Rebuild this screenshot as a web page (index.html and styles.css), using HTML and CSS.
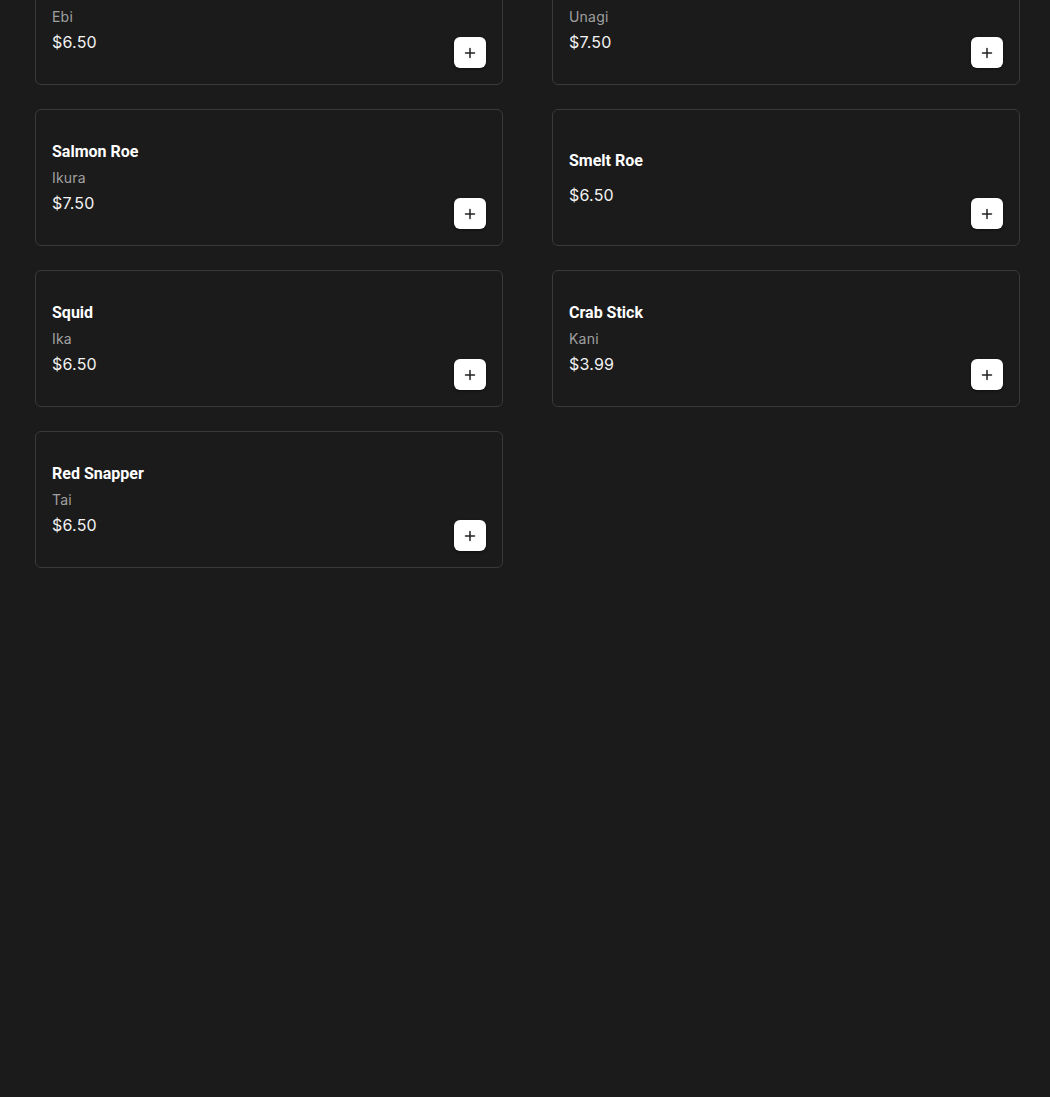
FILE: index.html
```html
<!DOCTYPE html>
<html lang="en">
<head>
    <meta charset="UTF-8">
    <meta name="viewport" content="width=device-width, initial-scale=1.0">
    <title>Sushi Menu</title>
    <link rel="stylesheet" href="styles.css">
</head>
<body>
    <div class="menu-grid">
        <div class="item-card">
            <div class="item-info">
                <div class="item-name">Shrimp</div>
                <div class="item-sub">Ebi</div>
                <div class="item-price">$6.50</div>
            </div>
            <button class="add-btn" aria-label="Add"><svg viewBox="0 0 12 12" width="12" height="12"><path d="M6 1.5v9M1.5 6h9" stroke="#222" stroke-width="1.5" stroke-linecap="round"/></svg></button>
        </div>
        <div class="item-card">
            <div class="item-info">
                <div class="item-name">Freshwater Eel</div>
                <div class="item-sub">Unagi</div>
                <div class="item-price">$7.50</div>
            </div>
            <button class="add-btn" aria-label="Add"><svg viewBox="0 0 12 12" width="12" height="12"><path d="M6 1.5v9M1.5 6h9" stroke="#222" stroke-width="1.5" stroke-linecap="round"/></svg></button>
        </div>
        <div class="item-card">
            <div class="item-info">
                <div class="item-name">Salmon Roe</div>
                <div class="item-sub">Ikura</div>
                <div class="item-price">$7.50</div>
            </div>
            <button class="add-btn" aria-label="Add"><svg viewBox="0 0 12 12" width="12" height="12"><path d="M6 1.5v9M1.5 6h9" stroke="#222" stroke-width="1.5" stroke-linecap="round"/></svg></button>
        </div>
        <div class="item-card">
            <div class="item-info">
                <div class="item-name">Smelt Roe</div>
                <div class="item-price">$6.50</div>
            </div>
            <button class="add-btn" aria-label="Add"><svg viewBox="0 0 12 12" width="12" height="12"><path d="M6 1.5v9M1.5 6h9" stroke="#222" stroke-width="1.5" stroke-linecap="round"/></svg></button>
        </div>
        <div class="item-card">
            <div class="item-info">
                <div class="item-name">Squid</div>
                <div class="item-sub">Ika</div>
                <div class="item-price">$6.50</div>
            </div>
            <button class="add-btn" aria-label="Add"><svg viewBox="0 0 12 12" width="12" height="12"><path d="M6 1.5v9M1.5 6h9" stroke="#222" stroke-width="1.5" stroke-linecap="round"/></svg></button>
        </div>
        <div class="item-card">
            <div class="item-info">
                <div class="item-name">Crab Stick</div>
                <div class="item-sub">Kani</div>
                <div class="item-price">$3.99</div>
            </div>
            <button class="add-btn" aria-label="Add"><svg viewBox="0 0 12 12" width="12" height="12"><path d="M6 1.5v9M1.5 6h9" stroke="#222" stroke-width="1.5" stroke-linecap="round"/></svg></button>
        </div>
        <div class="item-card">
            <div class="item-info">
                <div class="item-name">Red Snapper</div>
                <div class="item-sub">Tai</div>
                <div class="item-price">$6.50</div>
            </div>
            <button class="add-btn" aria-label="Add"><svg viewBox="0 0 12 12" width="12" height="12"><path d="M6 1.5v9M1.5 6h9" stroke="#222" stroke-width="1.5" stroke-linecap="round"/></svg></button>
        </div>
    </div>
</body>
</html>
```

FILE: styles.css
```css
body {
    margin: 0;
    padding: 0;
    background-color: #1b1b1b;
    font-family: "Inter", sans-serif;
    min-height: 100vh;
    overflow: hidden;
}
.menu-grid {
    display: grid;
    grid-template-columns: 468px 468px;
    column-gap: 49px;
    row-gap: 24px;
    padding: 0 30px 0 35px;
    margin-top: -52px;
}
.item-card {
    height: 137px;
    box-sizing: border-box;
    border: 1px solid #3a3a3a;
    border-radius: 6px;
    background-color: #1b1b1b;
    padding: 16px;
    display: flex;
    justify-content: space-between;
    align-items: center;
}
.item-info {
    display: flex;
    flex-direction: column;
}
.item-name {
    font-family: "Roboto", sans-serif;
    font-weight: 700;
    font-size: 16px;
    line-height: 24px;
    color: #ffffff;
}
.item-sub {
    font-size: 14px;
    line-height: 20px;
    margin-top: 4px;
    color: #a0a0a0;
    letter-spacing: 0.2px;
}
.item-price {
    font-size: 16px;
    line-height: 24px;
    margin-top: 3px;
    color: #f2f2f2;
    letter-spacing: 0.2px;
}
.item-name + .item-price {
    margin-top: 10px;
}
.add-btn {
    align-self: flex-end;
    width: 32px;
    height: 31px;
    padding: 0;
    border: none;
    border-radius: 6px;
    background-color: #ffffff;
    box-shadow: 0 1px 3px rgba(0,0,0,0.5);
    display: flex;
    align-items: center;
    justify-content: center;
    cursor: pointer;
}
```
